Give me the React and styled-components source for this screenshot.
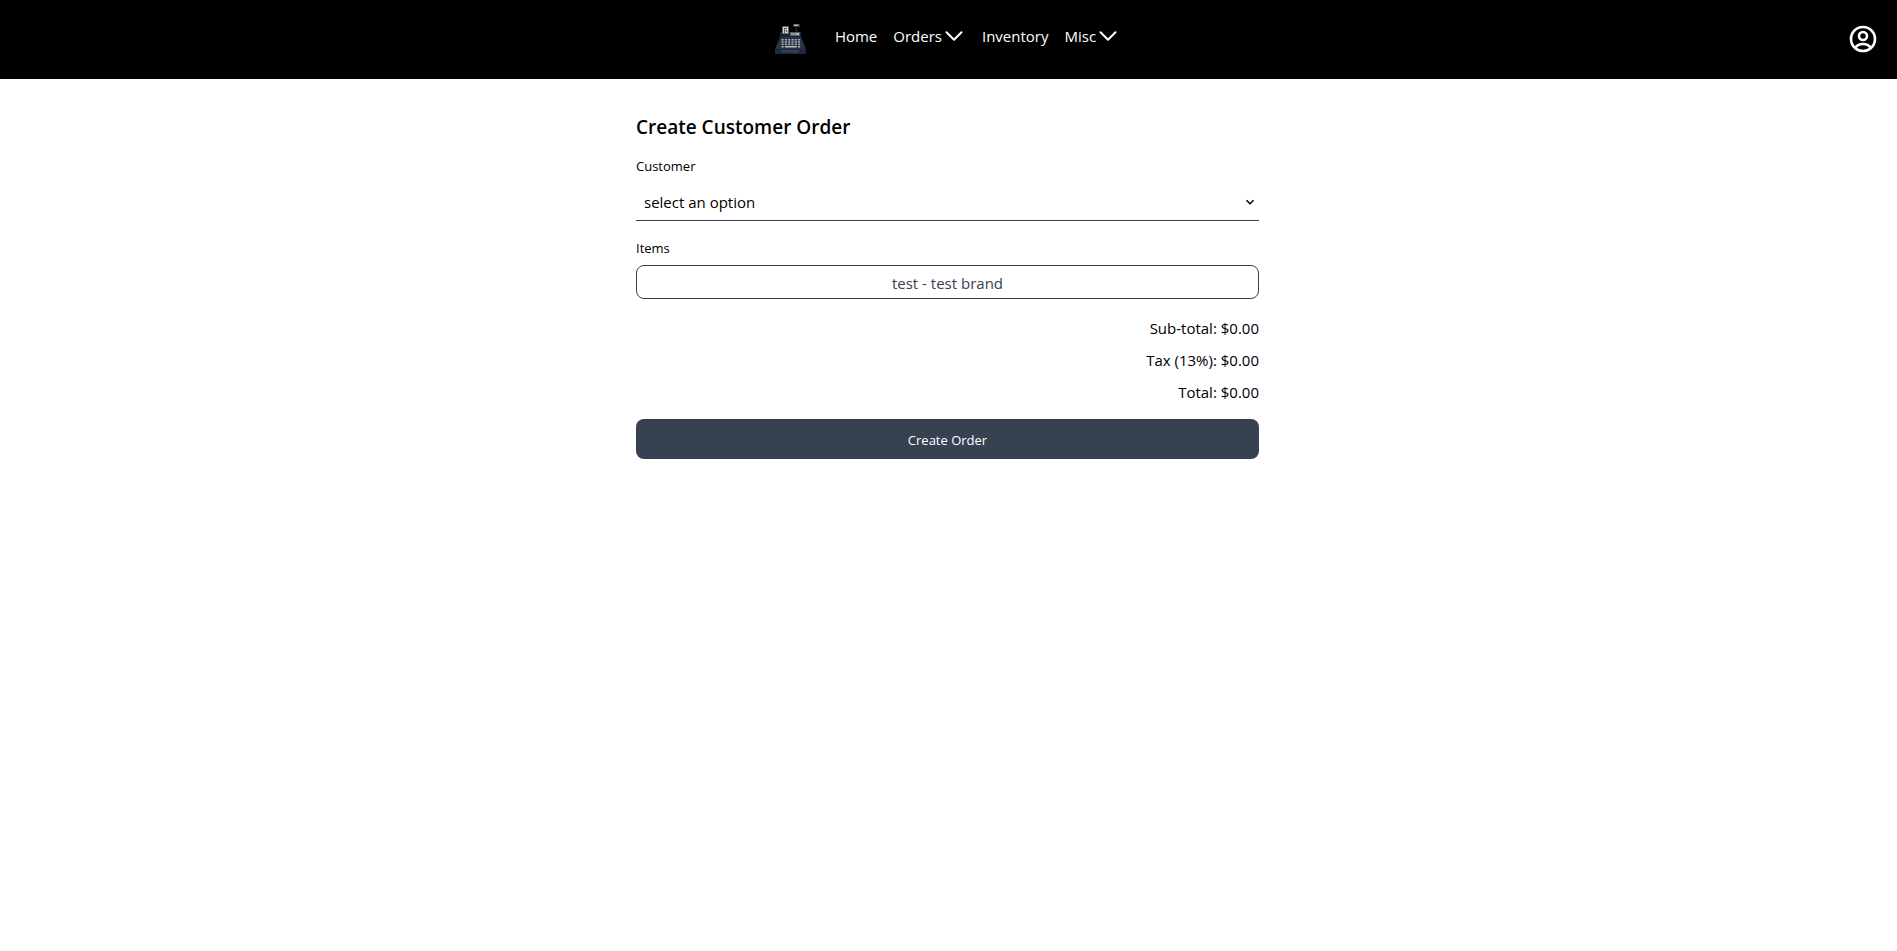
import React from "react";
import styled, { createGlobalStyle } from "styled-components";
import { HiOutlineChevronDown, HiOutlineUserCircle } from "react-icons/hi2";

const GlobalStyle = createGlobalStyle`
  *, *::before, *::after { box-sizing: border-box; }
  body {
    margin: 0;
    background: #fff;
    color: #000;
    font: 400 15px/24px "Segoe UI", "Open Sans", sans-serif;
  }
  h1, p { margin: 0; }
  button, select { font: inherit; }
`;

const Header = styled.header`
  display: grid;
  grid-template-columns: 1fr auto 1fr;
  align-items: center;
  padding: 15px 16px 16px;
  background: #000;
  color: #fff;
`;

const Nav = styled.nav`
  grid-column: 2;
  display: flex;
  align-items: center;
  gap: 16px;
  padding-right: 10px;
`;

const LogoLink = styled.a`
  display: flex;
  padding: 8px;
  margin-right: 4px;
`;

const NavItem = styled.a`
  color: inherit;
  text-decoration: none;
  padding-bottom: 6px;
`;

const NavMenu = styled.button`
  display: flex;
  align-items: center;
  padding: 0 0 6px;
  border: 0;
  background: none;
  color: inherit;
  cursor: pointer;
`;

const AccountButton = styled.button`
  grid-column: 3;
  justify-self: end;
  display: flex;
  padding: 2px;
  border: 0;
  background: none;
  color: inherit;
  cursor: pointer;
`;

const Main = styled.main`
  display: grid;
  grid-template-columns: repeat(3, 1fr);
  column-gap: 13px;
  padding: 34px 2px 34px 0;
`;

const Form = styled.form`
  grid-column: 2;
  display: flex;
  flex-direction: column;
`;

const Title = styled.h1`
  font-size: 19px;
  line-height: 28px;
  font-weight: 600;
`;

const Label = styled.label`
  margin-top: 15px;
  font-size: 13px;
  line-height: 20px;
`;

const SelectField = styled.div`
  position: relative;
  margin: 5px 0 2px;
  border-bottom: 1px solid #374151;
`;

const Select = styled.select`
  appearance: none;
  display: block;
  width: 100%;
  height: 39px;
  padding: 4px 24px 1px 8px;
  border: 0;
  border-radius: 0;
  background: transparent;
  color: inherit;
`;

const SelectArrow = styled.svg`
  position: absolute;
  top: 16px;
  right: 4px;
  pointer-events: none;
`;

const ItemButton = styled.button`
  height: 34px;
  margin-top: 7px;
  padding: 2px 8px 0;
  border: 1px solid #374151;
  border-radius: 8px;
  background: #fff;
  color: #374151;
  cursor: pointer;
`;

const Totals = styled.div`
  display: flex;
  flex-direction: column;
  gap: 8px;
  margin: 17px 0 15px;
  text-align: right;
`;

const SubmitButton = styled.button`
  height: 40px;
  padding: 2px 8px 0;
  border: 0;
  border-radius: 8px;
  background: #374151;
  color: #fff;
  font-size: 13px;
  font-weight: 500;
  cursor: pointer;
`;

function RegisterLogo() {
  const columns = [6.6, 9.9, 13.2, 16.5, 19.8, 23.1];
  return (
    <svg width="32" height="32" viewBox="0 0 32 32" role="img" aria-label="Cash register">
      <path d="M5 9h21v8H5z" fill="#1b2534" />
      <path d="M5 14h21l5 12H0z" fill="#263347" />
      <path d="M0 26h31v5H0z" fill="#1e293a" />
      <path d="M7 27h17v2.500H7z" fill="#30425a" />
      <path d="M7.500 3.500h6v7h-6z" fill="#d0d0ce" />
      <path d="M9 5h3v1h-2v4H9zM11 7h1v2h-1z" fill="#55585c" />
      <path d="M20.500 3h2v6h-2z" fill="#172333" />
      <path d="M18 1h7v3h-7z" fill="#263548" />
      <path d="M19 1.500h4.500v1.500H19z" fill="#b9bec1" />
      <path d="M15 9h10v4H15z" fill="#565f68" />
      <path d="M16 10h5v2h-5z" fill="#8f9596" />
      <path d="M21 10h3v2h-3z" fill="#b5b5ad" />
      {[16, 18.3, 20.6].map((y) =>
        columns.map((x) => (
          <rect key={`${y}-${x}`} x={x} y={y} width="2" height="1.5" fill="#a9b0b8" />
        ))
      )}
      <path d="M6.600 23h2v1.500h-2zM9.900 23h12v1.500h-12zM23.100 23h2v1.500h-2z" fill="#b4bac0" />
    </svg>
  );
}

export default function App() {
  return (
    <>
      <GlobalStyle />
      <Header>
        <Nav>
          <LogoLink href="#home"><RegisterLogo /></LogoLink>
          <NavItem href="#home">Home</NavItem>
          <NavMenu type="button">Orders<HiOutlineChevronDown size={24} strokeWidth={2} aria-hidden="true" /></NavMenu>
          <NavItem href="#inventory">Inventory</NavItem>
          <NavMenu type="button">Misc<HiOutlineChevronDown size={24} strokeWidth={2} aria-hidden="true" /></NavMenu>
        </Nav>
        <AccountButton type="button" aria-label="Account">
          <HiOutlineUserCircle size={32} strokeWidth={2} />
        </AccountButton>
      </Header>
      <Main>
        <Form onSubmit={(event) => event.preventDefault()}>
          <Title>Create Customer Order</Title>
          <Label htmlFor="customer">Customer</Label>
          <SelectField>
            <Select id="customer" defaultValue="">
              <option value="">select an option</option>
            </Select>
            <SelectArrow width="10" height="10" viewBox="0 0 10 10" aria-hidden="true">
              <path d="M1.500 3.200 5 6.700 8.500 3.200" fill="none" stroke="#000" strokeWidth="1.500" />
            </SelectArrow>
          </SelectField>
          <Label htmlFor="item">Items</Label>
          <ItemButton id="item" type="button">test - test brand</ItemButton>
          <Totals>
            <p>Sub-total: $0.00</p>
            <p>Tax (13%): $0.00</p>
            <p>Total: $0.00</p>
          </Totals>
          <SubmitButton type="submit">Create Order</SubmitButton>
        </Form>
      </Main>
    </>
  );
}
